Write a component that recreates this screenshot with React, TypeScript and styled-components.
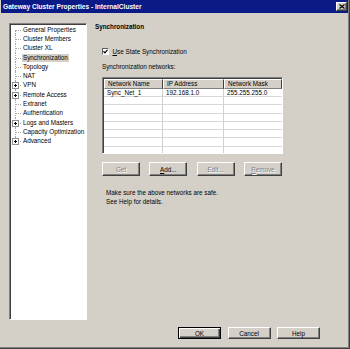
import React from "react";
import styled, { createGlobalStyle, css } from "styled-components";

const GlobalStyle = createGlobalStyle`
  html, body {
    margin: 0;
    padding: 0;
    background: #d4d0c8;
  }
  body {
    font-family: "Liberation Sans", Arial, sans-serif;
    font-size: 6.3px;
    color: #000;
  }
`;

const Window = styled.div`
  box-sizing: border-box;
  width: 350px;
  height: 349px;
  display: flex;
  flex-direction: column;
  background: #d4d0c8;
  border-right: 1px solid #404040;
  border-bottom: 1px solid #404040;
  box-shadow: inset -1px -1px 0 #808080;
  padding: 0 1px 1px 1px;
`;

const TitleBar = styled.div`
  height: 13px;
  flex: none;
  display: flex;
  align-items: center;
  justify-content: space-between;
  padding: 0 1px 0 2px;
  background: #0a1a86;
  color: #fff;
  font-weight: bold;
  font-size: 6.6px;
`;

const CloseButton = styled.div`
  box-sizing: border-box;
  width: 11px;
  height: 9px;
  display: flex;
  align-items: center;
  justify-content: center;
  background: #d4d0c8;
  border: 1px solid;
  border-color: #fff #404040 #404040 #fff;
  box-shadow: inset -1px -1px 0 #808080;
`;

const Body = styled.div`
  display: flex;
  padding: 10px 0 0 8px;
  height: 307px;
  box-sizing: border-box;
  flex: none;
`;

const Tree = styled.div`
  box-sizing: border-box;
  width: 78px;
  height: 297px;
  background: #fff;
  border: 1px solid;
  border-color: #808080 #fff #fff #808080;
  box-shadow: inset 1px 1px 0 #404040;
  padding-top: 1px;
`;

const TreeRow = styled.div`
  height: 9.3px;
  display: flex;
  align-items: center;
`;

const Gutter = styled.div<{ $first?: boolean; $last?: boolean }>`
  position: relative;
  width: 12px;
  height: 100%;
  flex: none;
  &::before {
    content: "";
    position: absolute;
    left: 5px;
    top: ${(p) => (p.$first ? "50%" : "0")};
    bottom: ${(p) => (p.$last ? "50%" : "0")};
    border-left: 1px dotted #a8a8a8;
  }
  &::after {
    content: "";
    position: absolute;
    left: 6px;
    width: 5px;
    top: 50%;
    border-top: 1px dotted #a8a8a8;
  }
`;

const Expander = styled.svg`
  position: absolute;
  left: 2px;
  top: calc(50% - 3px);
  z-index: 1;
`;

const TreeLabel = styled.span<{ $selected?: boolean }>`
  line-height: 8px;
  padding: 0 1px;
  white-space: nowrap;
  ${(p) =>
    p.$selected &&
    css`
      background: #d4d0c8;
    `}
`;

const Page = styled.div`
  margin-left: 8px;
  display: flex;
  flex-direction: column;
`;

const PageTitle = styled.div`
  font-weight: bold;
  line-height: 8px;
`;

const Section = styled.div`
  margin-left: 7px;
  display: flex;
  flex-direction: column;
`;

const CheckRow = styled.label`
  margin-top: 16.7px;
  display: flex;
  align-items: center;
  gap: 3.5px;
  line-height: 8px;
`;

const CheckBox = styled.span`
  box-sizing: border-box;
  width: 7px;
  height: 7px;
  display: flex;
  align-items: center;
  justify-content: center;
  background: #fff;
  border: 1px solid;
  border-color: #606060 #fff #fff #606060;
`;

const Text = styled.div<{ $mt?: number }>`
  line-height: 8.4px;
  margin-top: ${(p) => p.$mt ?? 0}px;
`;

const TableBox = styled.div`
  margin-top: 5.7px;
  box-sizing: border-box;
  width: 181px;
  height: 77px;
  background: #fff;
  border: 1px solid;
  border-color: #808080 #fff #fff #808080;
  box-shadow: inset 1px 1px 0 #404040;
  padding: 1px 0 0 1px;
  overflow: hidden;
`;

const GridRow = styled.div<{ $header?: boolean }>`
  display: grid;
  grid-template-columns: 59px 61px 1fr;
  height: ${(p) => (p.$header ? "9.5px" : "8.25px")};
`;

const HeadCell = styled.div`
  box-sizing: border-box;
  background: #d4d0c8;
  border: 1px solid;
  border-color: #fff #404040 #808080 #fff;
  padding-left: 3px;
  line-height: 7.5px;
  white-space: nowrap;
`;

const Cell = styled.div`
  box-sizing: border-box;
  border-right: 1px solid #d0d0d0;
  border-bottom: 1px solid #d8d8d8;
  padding-left: 3px;
  line-height: 7.25px;
  white-space: nowrap;
  &:last-child {
    border-right: none;
  }
`;

const ButtonRow = styled.div`
  margin-top: 8px;
  display: flex;
  gap: 9.3px;
`;

const Button = styled.div<{ $disabled?: boolean; $default?: boolean; $w?: number; $h?: number }>`
  box-sizing: border-box;
  width: ${(p) => p.$w ?? 38}px;
  height: ${(p) => p.$h ?? 13.5}px;
  display: flex;
  align-items: center;
  justify-content: center;
  background: #d4d0c8;
  border: 1px solid;
  border-color: #fff #404040 #404040 #fff;
  box-shadow: inset -1px -1px 0 #808080;
  ${(p) =>
    p.$disabled &&
    css`
      color: #808080;
      text-shadow: 1px 1px 0 #fff;
    `}
  ${(p) =>
    p.$default &&
    css`
      border-color: #000;
      box-shadow: inset 1px 1px 0 #fff, inset -1px -1px 0 #404040,
        inset -2px -2px 0 #808080;
    `}
`;

const Notes = styled.div`
  margin-top: 13.6px;
  margin-left: 4px;
`;

const Footer = styled.div`
  display: flex;
  justify-content: flex-end;
  gap: 6.5px;
  padding: 7px 28px 0 0;
`;

const treeItems = [
  { label: "General Properties" },
  { label: "Cluster Members" },
  { label: "Cluster XL" },
  { label: "Synchronization", selected: true },
  { label: "Topology" },
  { label: "NAT" },
  { label: "VPN", expand: true },
  { label: "Remote Access", expand: true },
  { label: "Extranet" },
  { label: "Authentication" },
  { label: "Logs and Masters", expand: true },
  { label: "Capacity Optimization" },
  { label: "Advanced", expand: true },
];

const rows = [
  ["Sync_Net_1", "192.168.1.0", "255.255.255.0"],
  ["", "", ""],
  ["", "", ""],
  ["", "", ""],
  ["", "", ""],
  ["", "", ""],
  ["", "", ""],
  ["", "", ""],
];

const PlusBox = () => (
  <Expander width="7" height="7" viewBox="0 0 7 7">
    <rect x="0.5" y="0.5" width="6" height="6" fill="#fff" stroke="#909090" />
    <path d="M2 3.5h3M3.5 2v3" stroke="#000" strokeWidth="1" />
  </Expander>
);

export default function App() {
  return (
    <>
      <GlobalStyle />
      <Window>
        <TitleBar>
          <span>Gateway Cluster Properties - InternalCluster</span>
          <CloseButton>
            <svg width="6" height="5" viewBox="0 0 6 5">
              <path d="M0.5 0.5l5 4M5.5 0.5l-5 4" stroke="#000" strokeWidth="1.2" />
            </svg>
          </CloseButton>
        </TitleBar>
        <Body>
          <Tree>
            {treeItems.map((item, i) => (
              <TreeRow key={item.label}>
                <Gutter $first={i === 0} $last={i === treeItems.length - 1}>
                  {item.expand && <PlusBox />}
                </Gutter>
                <TreeLabel $selected={item.selected}>{item.label}</TreeLabel>
              </TreeRow>
            ))}
          </Tree>
          <Page>
            <PageTitle>Synchronization</PageTitle>
            <Section>
              <CheckRow>
                <CheckBox>
                  <svg width="5" height="5" viewBox="0 0 5 5">
                    <path d="M0.5 2.2l1.4 1.6L4.5 0.8" fill="none" stroke="#000" strokeWidth="1.2" />
                  </svg>
                </CheckBox>
                <span>
                  <u>U</u>se State Synchronization
                </span>
              </CheckRow>
              <Text $mt={7.6}>Synchronization networks:</Text>
              <TableBox>
                <GridRow $header>
                  <HeadCell>Network Name</HeadCell>
                  <HeadCell>IP Address</HeadCell>
                  <HeadCell>Network Mask</HeadCell>
                </GridRow>
                {rows.map((r, i) => (
                  <GridRow key={i}>
                    {r.map((c, j) => (
                      <Cell key={j}>{c}</Cell>
                    ))}
                  </GridRow>
                ))}
              </TableBox>
              <ButtonRow>
                <Button $disabled>Get</Button>
                <Button>
                  <span>
                    <u>A</u>dd...
                  </span>
                </Button>
                <Button $disabled>Edit...</Button>
                <Button $disabled>
                  <span>
                    <u>R</u>emove
                  </span>
                </Button>
              </ButtonRow>
              <Notes>
                <Text>Make sure the above networks are safe.</Text>
                <Text>See Help for details.</Text>
              </Notes>
            </Section>
          </Page>
        </Body>
        <Footer>
          <Button $default $w={43} $h={12}>OK</Button>
          <Button $w={43} $h={12}>Cancel</Button>
          <Button $w={43} $h={12}>Help</Button>
        </Footer>
      </Window>
    </>
  );
}
